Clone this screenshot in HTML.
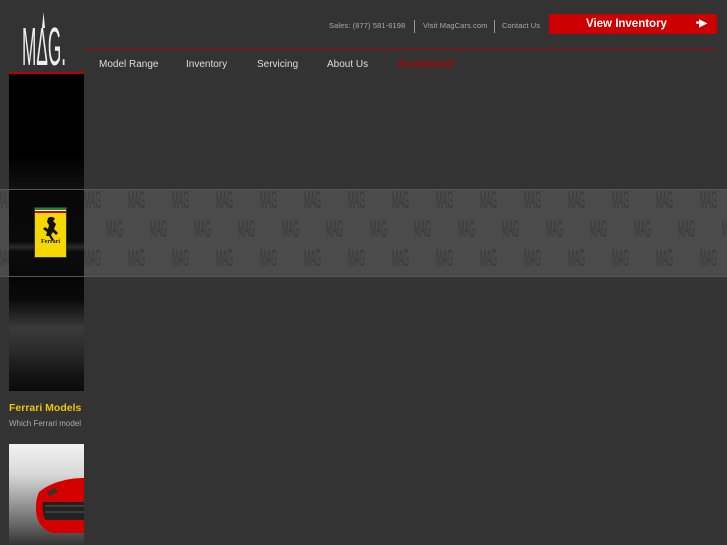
<!DOCTYPE html>
<html><head><meta charset="utf-8"><style>
*{margin:0;padding:0;box-sizing:border-box}
body{width:727px;height:545px;overflow:hidden;background:#333;font-family:"Liberation Sans",sans-serif;position:relative}
.abs{position:absolute}
.top{top:21px;font-size:7.5px;color:#aaa;letter-spacing:.1px}
.sep{top:20px;width:1px;height:13px;background:#999}
.nav{top:59px;font-size:10px;color:#ddd}
</style></head><body>
<!-- logo -->
<svg class="abs" style="left:18px;top:8px" width="52" height="60" viewBox="0 0 52 60">
 <text x="4" y="57" font-family="Liberation Sans" font-size="54" fill="#eee" textLength="44" lengthAdjust="spacingAndGlyphs">M&#916;G.</text>
 <path d="M25.5 4L24 20h3z" fill="#eee"/>
</svg>
<div class="abs" style="left:9px;top:72px;width:75px;height:2px;background:#b00"></div>
<!-- top links -->
<div class="abs top" style="left:329px">Sales: (877) 581-6198</div>
<div class="abs sep" style="left:414px"></div>
<div class="abs top" style="left:423px">Visit MagCars.com</div>
<div class="abs sep" style="left:494px"></div>
<div class="abs top" style="left:502px">Contact Us</div>
<div class="abs" style="left:549px;top:14px;width:168px;height:20px;background:#c00;color:#fff;font-weight:bold;font-size:11.5px;line-height:20px;padding-left:37px">View Inventory<span style="position:absolute;right:10px;top:0;font-size:10px">&#8226;&#9654;</span></div>
<div class="abs" style="left:84px;top:48px;width:633px;height:1px;background:#a00"></div>
<div class="abs nav" style="left:99px">Model Range</div>
<div class="abs nav" style="left:186px">Inventory</div>
<div class="abs nav" style="left:257px">Servicing</div>
<div class="abs nav" style="left:327px">About Us</div>
<div class="abs nav" style="left:398px;color:#a00;font-weight:bold;font-style:italic">Excitement!</div>
<!-- left column images -->
<div class="abs" style="left:9px;top:74px;width:75px;height:116px;background:linear-gradient(#000 0%,#000 70%,#111 100%)"></div>
<div class="abs" style="left:0;top:189px;width:727px;height:88px;background:#4b4b4b;border-top:1px solid #555;border-bottom:1px solid #555;overflow:hidden">
<svg width="727" height="88" style="display:block" font-family="Liberation Sans" font-size="24" fill="#3a3a3a">
<text x="-4" y="18" textLength="17" lengthAdjust="spacingAndGlyphs">MAG</text><text x="40" y="18" textLength="17" lengthAdjust="spacingAndGlyphs">MAG</text><text x="84" y="18" textLength="17" lengthAdjust="spacingAndGlyphs">MAG</text><text x="128" y="18" textLength="17" lengthAdjust="spacingAndGlyphs">MAG</text><text x="172" y="18" textLength="17" lengthAdjust="spacingAndGlyphs">MAG</text><text x="216" y="18" textLength="17" lengthAdjust="spacingAndGlyphs">MAG</text><text x="260" y="18" textLength="17" lengthAdjust="spacingAndGlyphs">MAG</text><text x="304" y="18" textLength="17" lengthAdjust="spacingAndGlyphs">MAG</text><text x="348" y="18" textLength="17" lengthAdjust="spacingAndGlyphs">MAG</text><text x="392" y="18" textLength="17" lengthAdjust="spacingAndGlyphs">MAG</text><text x="436" y="18" textLength="17" lengthAdjust="spacingAndGlyphs">MAG</text><text x="480" y="18" textLength="17" lengthAdjust="spacingAndGlyphs">MAG</text><text x="524" y="18" textLength="17" lengthAdjust="spacingAndGlyphs">MAG</text><text x="568" y="18" textLength="17" lengthAdjust="spacingAndGlyphs">MAG</text><text x="612" y="18" textLength="17" lengthAdjust="spacingAndGlyphs">MAG</text><text x="656" y="18" textLength="17" lengthAdjust="spacingAndGlyphs">MAG</text><text x="700" y="18" textLength="17" lengthAdjust="spacingAndGlyphs">MAG</text>
<text x="18" y="47" textLength="17" lengthAdjust="spacingAndGlyphs">MAG</text><text x="62" y="47" textLength="17" lengthAdjust="spacingAndGlyphs">MAG</text><text x="106" y="47" textLength="17" lengthAdjust="spacingAndGlyphs">MAG</text><text x="150" y="47" textLength="17" lengthAdjust="spacingAndGlyphs">MAG</text><text x="194" y="47" textLength="17" lengthAdjust="spacingAndGlyphs">MAG</text><text x="238" y="47" textLength="17" lengthAdjust="spacingAndGlyphs">MAG</text><text x="282" y="47" textLength="17" lengthAdjust="spacingAndGlyphs">MAG</text><text x="326" y="47" textLength="17" lengthAdjust="spacingAndGlyphs">MAG</text><text x="370" y="47" textLength="17" lengthAdjust="spacingAndGlyphs">MAG</text><text x="414" y="47" textLength="17" lengthAdjust="spacingAndGlyphs">MAG</text><text x="458" y="47" textLength="17" lengthAdjust="spacingAndGlyphs">MAG</text><text x="502" y="47" textLength="17" lengthAdjust="spacingAndGlyphs">MAG</text><text x="546" y="47" textLength="17" lengthAdjust="spacingAndGlyphs">MAG</text><text x="590" y="47" textLength="17" lengthAdjust="spacingAndGlyphs">MAG</text><text x="634" y="47" textLength="17" lengthAdjust="spacingAndGlyphs">MAG</text><text x="678" y="47" textLength="17" lengthAdjust="spacingAndGlyphs">MAG</text><text x="722" y="47" textLength="17" lengthAdjust="spacingAndGlyphs">MAG</text>
<text x="-4" y="76" textLength="17" lengthAdjust="spacingAndGlyphs">MAG</text><text x="40" y="76" textLength="17" lengthAdjust="spacingAndGlyphs">MAG</text><text x="84" y="76" textLength="17" lengthAdjust="spacingAndGlyphs">MAG</text><text x="128" y="76" textLength="17" lengthAdjust="spacingAndGlyphs">MAG</text><text x="172" y="76" textLength="17" lengthAdjust="spacingAndGlyphs">MAG</text><text x="216" y="76" textLength="17" lengthAdjust="spacingAndGlyphs">MAG</text><text x="260" y="76" textLength="17" lengthAdjust="spacingAndGlyphs">MAG</text><text x="304" y="76" textLength="17" lengthAdjust="spacingAndGlyphs">MAG</text><text x="348" y="76" textLength="17" lengthAdjust="spacingAndGlyphs">MAG</text><text x="392" y="76" textLength="17" lengthAdjust="spacingAndGlyphs">MAG</text><text x="436" y="76" textLength="17" lengthAdjust="spacingAndGlyphs">MAG</text><text x="480" y="76" textLength="17" lengthAdjust="spacingAndGlyphs">MAG</text><text x="524" y="76" textLength="17" lengthAdjust="spacingAndGlyphs">MAG</text><text x="568" y="76" textLength="17" lengthAdjust="spacingAndGlyphs">MAG</text><text x="612" y="76" textLength="17" lengthAdjust="spacingAndGlyphs">MAG</text><text x="656" y="76" textLength="17" lengthAdjust="spacingAndGlyphs">MAG</text><text x="700" y="76" textLength="17" lengthAdjust="spacingAndGlyphs">MAG</text>
</svg>
</div>
<div class="abs" style="left:9px;top:190px;width:75px;height:86px;background:linear-gradient(#070707 0%,#0a0a0a 60%,#2a2a2a 66%,#0c0c0c 72%,#080808 100%)"></div>
<!-- ferrari badge -->
<div class="abs" style="left:34px;top:207px;width:33px;height:51px;background:#f5d800;border:1px solid #333">
 <div style="height:2px;background:#1a8a2a"></div><div style="height:1px;background:#fff"></div><div style="height:2px;background:#d00"></div>
 <svg width="31" height="34" viewBox="0 0 31 34" style="display:block"><path d="M13 5c3-2 6-1 7 1l-2 2 3 3-2 5 4 4-2 2-3-3-2 3 3 5-2 1-3-5-3 0 1-4-4-3 2-2 3 2 1-4-2-3z" fill="#111"/></svg>
 <div style="font-size:6px;color:#111;text-align:center;font-family:'Liberation Serif',serif;font-weight:bold;margin-top:-8px">Ferrari</div>
</div>
<div class="abs" style="left:9px;top:277px;width:75px;height:114px;background:linear-gradient(#050505 0%,#0a0a0a 20%,#3a3a3a 45%,#2a2a2a 65%,#151515 85%,#0a0a0a 100%)"></div>
<div class="abs" style="left:9px;top:402px;font-size:10.5px;font-weight:bold;color:#f0c400">Ferrari Models</div>
<div class="abs" style="left:9px;top:419px;font-size:8px;color:#aaa;white-space:nowrap;width:75px;overflow:hidden">Which Ferrari model</div>
<!-- car image -->
<div class="abs" style="left:9px;top:444px;width:75px;height:101px;overflow:hidden;background:linear-gradient(#f2f2f2 0%,#d8d8d8 30%,#a0a0a0 55%,#666 80%,#333 100%)">
 <svg width="75" height="101" viewBox="0 0 75 101"><path d="M30 48c12-10 30-14 45-14v55H44c-8-2-14-8-16-16-2-10-1-18 2-25z" fill="#d40000"/><path d="M34 58h41v18H36c-2-6-3-12-2-18z" fill="#222"/><path d="M36 62h39M36 68h39" stroke="#555" stroke-width="1"/><path d="M38 48l8-4 3 4-9 4z" fill="#333"/></svg>
</div>
</body></html>
